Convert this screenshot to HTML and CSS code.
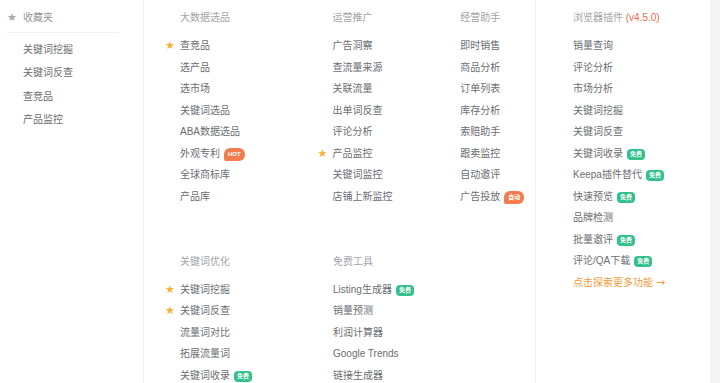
FILE: index.html
```html
<!DOCTYPE html>
<html lang="zh-CN">
<head>
  <meta charset="UTF-8">
  <title>功能导航</title>
  <link rel="stylesheet" href="styles.css">
</head>
<body>
  <div class="panel">
    <aside class="sidebar">
      <div class="fav-title"><span class="star grey">★</span>收藏夹</div>
      <ul class="fav-list">
        <li>关键词挖掘</li>
        <li>关键词反查</li>
        <li>查竞品</li>
        <li>产品监控</li>
      </ul>
    </aside>

    <main class="menu">
      <div class="menu-row">
        <section class="group g1">
          <h3>大数据选品</h3>
          <ul>
            <li><span class="star">★</span>查竞品</li>
            <li>选产品</li>
            <li>选市场</li>
            <li>关键词选品</li>
            <li>ABA数据选品</li>
            <li>外观专利<span class="tag hot">HOT</span></li>
            <li>全球商标库</li>
            <li>产品库</li>
          </ul>
        </section>
        <section class="group g2">
          <h3>运营推广</h3>
          <ul>
            <li>广告洞察</li>
            <li>查流量来源</li>
            <li>关联流量</li>
            <li>出单词反查</li>
            <li>评论分析</li>
            <li><span class="star">★</span>产品监控</li>
            <li>关键词监控</li>
            <li>店铺上新监控</li>
          </ul>
        </section>
        <section class="group g3">
          <h3>经营助手</h3>
          <ul>
            <li>即时销售</li>
            <li>商品分析</li>
            <li>订单列表</li>
            <li>库存分析</li>
            <li>索赔助手</li>
            <li>跟卖监控</li>
            <li>自动邀评</li>
            <li>广告投放<span class="tag hot">自动</span></li>
          </ul>
        </section>
      </div>
      <div class="menu-row second">
        <section class="group g1">
          <h3>关键词优化</h3>
          <ul>
            <li><span class="star">★</span>关键词挖掘</li>
            <li><span class="star">★</span>关键词反查</li>
            <li>流量词对比</li>
            <li>拓展流量词</li>
            <li>关键词收录<span class="tag free">免费</span></li>
          </ul>
        </section>
        <section class="group g2">
          <h3>免费工具</h3>
          <ul>
            <li>Listing生成器<span class="tag free">免费</span></li>
            <li>销量预测</li>
            <li>利润计算器</li>
            <li>Google Trends</li>
            <li>链接生成器</li>
          </ul>
        </section>
      </div>
    </main>

    <section class="plugin">
      <h3>浏览器插件 <span class="version">(v4.5.0)</span></h3>
      <ul>
        <li>销量查询</li>
        <li>评论分析</li>
        <li>市场分析</li>
        <li>关键词挖掘</li>
        <li>关键词反查</li>
        <li>关键词收录<span class="tag free">免费</span></li>
        <li>Keepa插件替代<span class="tag free">免费</span></li>
        <li>快速预览<span class="tag free">免费</span></li>
        <li>品牌检测</li>
        <li>批量邀评<span class="tag free">免费</span></li>
        <li>评论/QA下载<span class="tag free">免费</span></li>
        <li class="more">点击探索更多功能 <span class="arrow">→</span></li>
      </ul>
    </section>
  </div>
</body>
</html>
```

FILE: styles.css
```css
body {
  margin: 0;
  background-color: #f4f4f5;
  font-family: "Liberation Sans", "Noto Sans CJK SC", sans-serif;
  font-size: 10px;
  color: #6b6e72;
  overflow: hidden;
}

ul {
  list-style: none;
  margin: 0;
  padding: 0;
}

h3 {
  margin: 0;
  font-weight: normal;
  font-size: 10px;
  color: #a2a4a8;
}

.panel {
  display: flex;
  width: 710px;
  height: 383px;
  background-color: #fff;
}

.sidebar {
  width: 144px;
  border-right: 1px solid #eeeff1;
  padding: 7px 24px 0 7px;
  box-sizing: border-box;
}

.fav-title {
  line-height: 21px;
  color: #94969a;
  padding-bottom: 4px;
  border-bottom: 1px solid #f0f1f3;
}

.fav-title .star {
  width: 16px;
  margin-left: 0;
  font-size: 11px;
}

.fav-list {
  padding: 5px 0 0 16px;
}

.fav-list li {
  line-height: 23.4px;
}

.menu {
  width: 392px;
  padding: 7px 0 0 36px;
  box-sizing: border-box;
  border-right: 1px solid #eeeff1;
}

.menu-row {
  display: flex;
}

.menu-row.second {
  margin-top: 43.5px;
}

.group h3,
.plugin h3 {
  line-height: 21.5px;
  margin-bottom: 6.5px;
}

.group li,
.plugin li {
  line-height: 21.5px;
  white-space: nowrap;
}

.g1 {
  width: 153px;
}

.g2 {
  width: 128px;
}

.g3 {
  width: 75px;
}

.star {
  display: inline-block;
  width: 15px;
  margin-left: -15px;
  color: #f7b23b;
  font-family: "DejaVu Sans", sans-serif;
  font-size: 11px;
}

.star.grey {
  color: #a6a8ad;
}

.tag {
  display: inline-block;
  margin-left: 4px;
  padding: 0 3px;
  font-size: 6px;
  font-weight: bold;
  color: #fff;
  vertical-align: 1px;
}

.tag.hot {
  background-color: #f27c4d;
  border-radius: 6px 6px 6px 2px;
  padding: 0 4px;
  height: 13px;
  line-height: 13px;
}

.tag.free {
  background-color: #34c08b;
  border-radius: 4px;
  height: 11px;
  line-height: 11px;
}

.plugin {
  width: 173px;
  padding: 7px 0 0 37px;
  box-sizing: border-box;
}

.version {
  color: #ea6a4c;
}

.plugin .more {
  color: #f39a3c;
}

.arrow {
  font-family: "DejaVu Sans", sans-serif;
  font-size: 11px;
}
```
